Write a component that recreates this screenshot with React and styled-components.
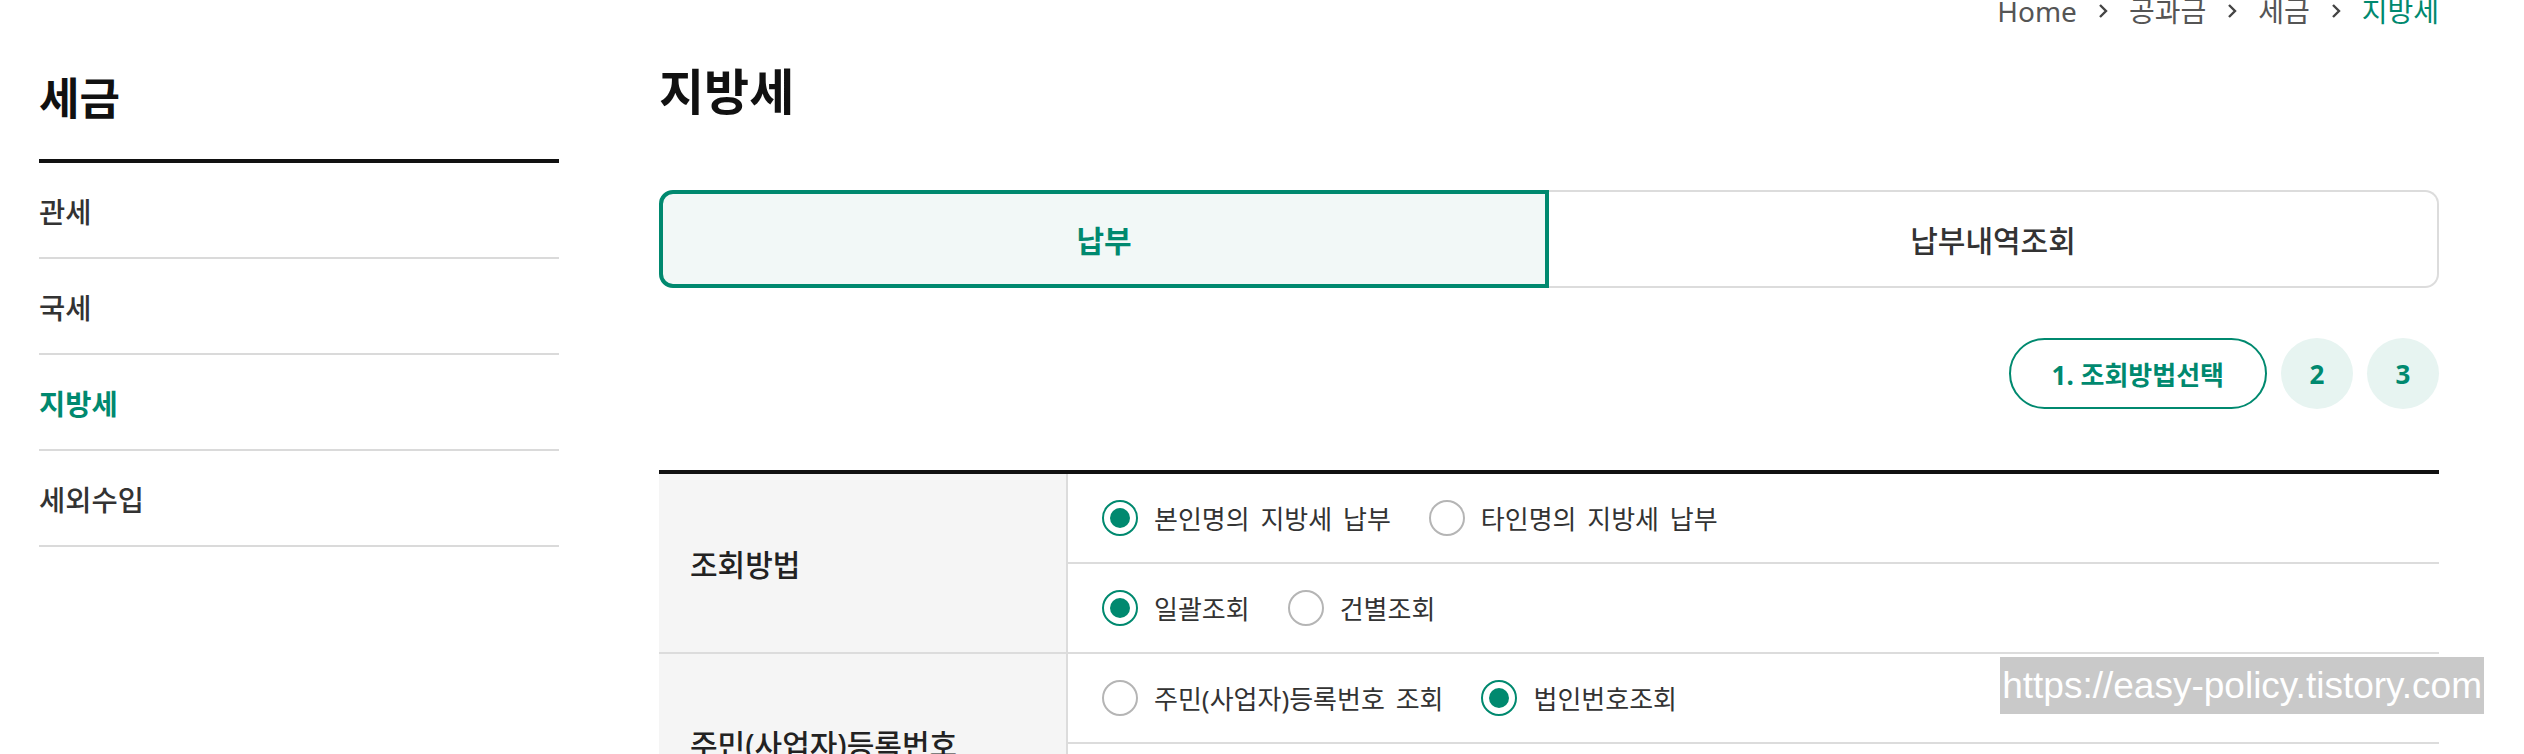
import React from "react";
import styled, { createGlobalStyle } from "styled-components";

const GREEN = "#00896f";

const Global = createGlobalStyle`
  html, body { margin: 0; padding: 0; background: #fff; }
  body { font-family: "Noto Sans", "Noto Sans CJK KR", sans-serif; color: #333; }
  * { box-sizing: border-box; }
`;

const Page = styled.div`
  position: relative;
  display: flex;
  align-items: flex-start;
  gap: 100px;
  padding: 0 85px 0 39px;
  height: 754px;
  overflow: hidden;
`;

const Sidebar = styled.aside`
  width: 520px;
  flex: none;
  padding-top: 76px;
`;

const SideTitle = styled.h2`
  margin: 0;
  font-size: 44px;
  line-height: 1;
  font-weight: 700;
  color: #111;
  padding-bottom: 39px;
  border-bottom: 4px solid #111;
`;

const NavList = styled.ul`
  list-style: none;
  margin: 0;
  padding: 0;
`;

const NavItem = styled.li`
  height: 96px;
  display: flex;
  align-items: center;
  border-bottom: 2px solid #dadada;
  font-size: 28.5px;
  font-weight: ${(p) => (p.$active ? 700 : 500)};
  color: ${(p) => (p.$active ? GREEN : "#333")};
`;

const Main = styled.main`
  flex: 1;
  min-width: 0;
`;

const Breadcrumb = styled.nav`
  display: flex;
  justify-content: flex-end;
  align-items: center;
  gap: 21px;
  height: 28px;
  margin-top: -3px;
  font-size: 28px;
  line-height: 1;
  color: #555;
`;

const Crumb = styled.span`
  color: ${(p) => (p.$current ? GREEN : "#555")};
`;

const Chevron = () => (
  <svg width="10" height="16" viewBox="0 0 10 16" aria-hidden="true">
    <polyline points="2,2 8,8 2,14" fill="none" stroke="#444" strokeWidth="2.4" strokeLinejoin="miter" />
  </svg>
);

const Heading = styled.h1`
  margin: 42px 0 0;
  font-size: 49px;
  line-height: 1;
  font-weight: 700;
  color: #111;
`;

const Tabs = styled.div`
  margin-top: 74px;
  display: grid;
  grid-template-columns: 1fr 1fr;
  height: 98px;
`;

const Tab = styled.div`
  display: flex;
  align-items: center;
  justify-content: center;
  font-size: 30px;
  ${(p) =>
    p.$active
      ? `
    border: 4px solid ${GREEN};
    border-radius: 14px 0 0 14px;
    background: #f2f8f7;
    color: ${GREEN};
    font-weight: 700;
  `
      : `
    border: 2px solid #dcdcdc;
    border-left: none;
    border-radius: 0 14px 14px 0;
    background: #fff;
    color: #333;
    font-weight: 500;
  `}
`;

const Steps = styled.div`
  margin-top: 50px;
  display: flex;
  justify-content: flex-end;
  gap: 14px;
`;

const StepPill = styled.div`
  height: 71px;
  padding: 0 41px;
  border: 2px solid ${GREEN};
  border-radius: 36px;
  display: flex;
  align-items: center;
  font-size: 26px;
  font-weight: 700;
  color: ${GREEN};
`;

const StepDot = styled.div`
  width: 72px;
  height: 71px;
  border-radius: 50%;
  background: #e7f4f1;
  display: flex;
  align-items: center;
  justify-content: center;
  font-size: 26px;
  font-weight: 700;
  color: ${GREEN};
`;

const Table = styled.div`
  margin-top: 61px;
  border-top: 4px solid #111;
`;

const Row = styled.div`
  display: grid;
  grid-template-columns: 409px 1fr;
  border-bottom: 2px solid #dcdcdc;
`;

const Th = styled.div`
  background: #f5f5f5;
  border-right: 2px solid #dcdcdc;
  padding-left: 31px;
  display: flex;
  align-items: center;
  font-size: 30px;
  font-weight: 500;
  color: #222;
`;

const Td = styled.div`
  display: flex;
  flex-direction: column;
`;

const Sub = styled.div`
  height: 88px;
  display: flex;
  align-items: center;
  gap: 38px;
  padding-left: 34px;
  & + & {
    border-top: 2px solid #dcdcdc;
    height: 90px;
  }
`;

const Option = styled.label`
  display: flex;
  align-items: center;
  gap: 16px;
  font-size: 26px;
  word-spacing: 4px;
  color: #333;
`;

const Radio = styled.span`
  width: 36px;
  height: 36px;
  border-radius: 50%;
  border: 2px solid ${(p) => (p.$checked ? GREEN : "#b5b5b5")};
  background: #fff;
  display: flex;
  align-items: center;
  justify-content: center;
  flex: none;
  &::after {
    content: "";
    width: 20px;
    height: 20px;
    border-radius: 50%;
    background: ${(p) => (p.$checked ? GREEN : "transparent")};
  }
`;

const Watermark = styled.div`
  position: absolute;
  top: 657px;
  right: 40px;
  height: 57px;
  padding: 0 2px;
  background: #c9c9c9;
  color: #fff;
  font-family: "Liberation Sans", Arial, sans-serif;
  font-size: 37px;
  line-height: 57px;
`;

const Opt = ({ checked, children }) => (
  <Option>
    <Radio $checked={checked} />
    {children}
  </Option>
);

export default function App() {
  const crumbs = ["Home", "공과금", "세금", "지방세"];
  return (
    <>
      <Global />
      <Page>
        <Sidebar>
          <SideTitle>세금</SideTitle>
          <NavList>
            <NavItem>관세</NavItem>
            <NavItem>국세</NavItem>
            <NavItem $active>지방세</NavItem>
            <NavItem>세외수입</NavItem>
          </NavList>
        </Sidebar>
        <Main>
          <Breadcrumb>
            {crumbs.map((c, i) => (
              <React.Fragment key={c}>
                {i > 0 && <Chevron />}
                <Crumb $current={i === crumbs.length - 1}>{c}</Crumb>
              </React.Fragment>
            ))}
          </Breadcrumb>
          <Heading>지방세</Heading>
          <Tabs>
            <Tab $active>납부</Tab>
            <Tab>납부내역조회</Tab>
          </Tabs>
          <Steps>
            <StepPill>1. 조회방법선택</StepPill>
            <StepDot>2</StepDot>
            <StepDot>3</StepDot>
          </Steps>
          <Table>
            <Row>
              <Th>조회방법</Th>
              <Td>
                <Sub>
                  <Opt checked>본인명의 지방세 납부</Opt>
                  <Opt>타인명의 지방세 납부</Opt>
                </Sub>
                <Sub>
                  <Opt checked>일괄조회</Opt>
                  <Opt>건별조회</Opt>
                </Sub>
              </Td>
            </Row>
            <Row>
              <Th>주민(사업자)등록번호</Th>
              <Td>
                <Sub>
                  <Opt>주민(사업자)등록번호 조회</Opt>
                  <Opt checked>법인번호조회</Opt>
                </Sub>
                <Sub />
              </Td>
            </Row>
          </Table>
        </Main>
        <Watermark>https://easy-policy.tistory.com</Watermark>
      </Page>
    </>
  );
}
